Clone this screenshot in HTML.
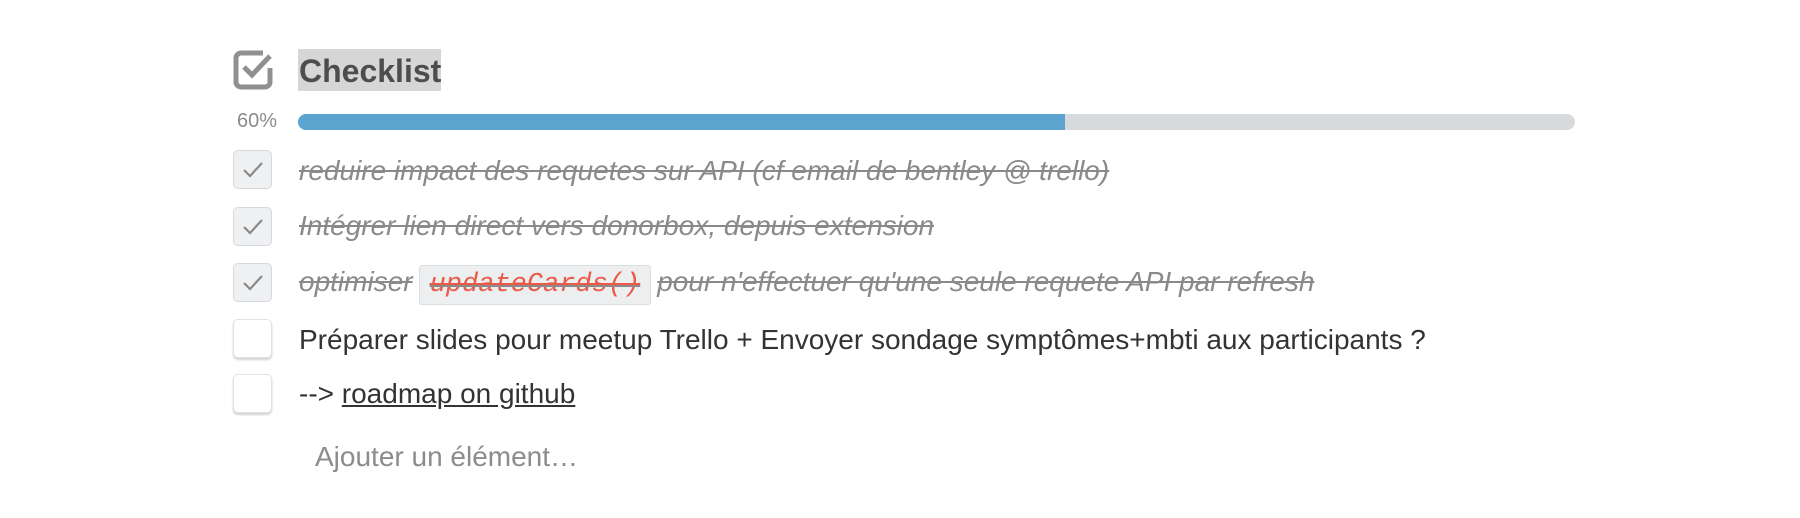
<!DOCTYPE html>
<html><head><meta charset="utf-8"><style>
body{margin:0;width:1800px;height:518px;background:#fff;font-family:"Liberation Sans",sans-serif;position:relative;overflow:hidden}
.a{position:absolute}
.cb{position:absolute;left:233px;width:39px;height:39px;border-radius:5px;box-sizing:border-box}
.done{background:#eef0f2;border:1px solid #d6dadc}
.todo{background:#fff;border:1px solid #e0e2e4;box-shadow:0 2px 2px rgba(0,0,0,.18)}
.t{position:absolute;left:299px;font-size:28px;white-space:nowrap;line-height:40px}
.s{color:#8a8a8a;font-style:italic;text-decoration:line-through}
.n{color:#333}
code{font-family:"Liberation Mono",monospace;font-style:italic;color:#eb5a46;background:#eceef0;border:1px solid #dcdfe2;border-radius:3px;padding:4px 10px;margin:0 6px 0 6px;font-size:27px;text-decoration:line-through}
</style></head><body>
<svg class="a" style="left:233px;top:48px" width="42" height="42" viewBox="0 0 42 42">
<path d="M30 5H8a5 5 0 0 0-5 5v24a5 5 0 0 0 5 5h24a5 5 0 0 0 5-5V20" fill="none" stroke="#909090" stroke-width="5"/>
<path d="M11 19l8 8 18-19" fill="none" stroke="#909090" stroke-width="5"/>
</svg>
<div class="a" style="left:298px;top:49px;height:42px;width:143px;background:#d6d6d6"></div>
<div class="a" style="left:299px;top:49px;font-size:32px;font-weight:bold;color:#4d4d4d;line-height:44px">Checklist</div>
<div class="a" style="left:237px;top:110px;font-size:20px;color:#8c8c8c">60%</div>
<div class="a" style="left:298px;top:114px;width:1277px;height:16px;border-radius:8px;background:#d6dadc"></div>
<div class="a" style="left:298px;top:114px;width:767px;height:16px;border-radius:8px 0 0 8px;background:#5ba4cf"></div>
<svg width="0" height="0"><defs><symbol id="ck" viewBox="0 0 37 37"><path d="M10 19l6 6 12-13" fill="none" stroke="#8a8a8a" stroke-width="2.2"/></symbol></defs></svg>
<div class="cb done" style="top:150px"><svg width="37" height="37"><use href="#ck"/></svg></div>
<div class="t s" style="top:151px">reduire impact des requetes sur API (cf email de bentley @ trello)</div>
<div class="cb done" style="top:207px"><svg width="37" height="37"><use href="#ck"/></svg></div>
<div class="t s" style="top:206px">Intégrer lien direct vers donorbox, depuis extension</div>
<div class="cb done" style="top:263px"><svg width="37" height="37"><use href="#ck"/></svg></div>
<div class="t s" style="top:262px">optimiser<code>updateCards()</code>pour n'effectuer qu'une seule requete API par refresh</div>
<div class="cb todo" style="top:319px"></div>
<div class="t n" style="top:320px">Préparer slides pour meetup Trello + Envoyer sondage symptômes+mbti aux participants ?</div>
<div class="cb todo" style="top:374px"></div>
<div class="t n" style="top:374px">--&gt; <u>roadmap on github</u></div>
<div class="t" style="top:437px;left:315px;color:#8c8c8c">Ajouter un élément…</div>
</body></html>
